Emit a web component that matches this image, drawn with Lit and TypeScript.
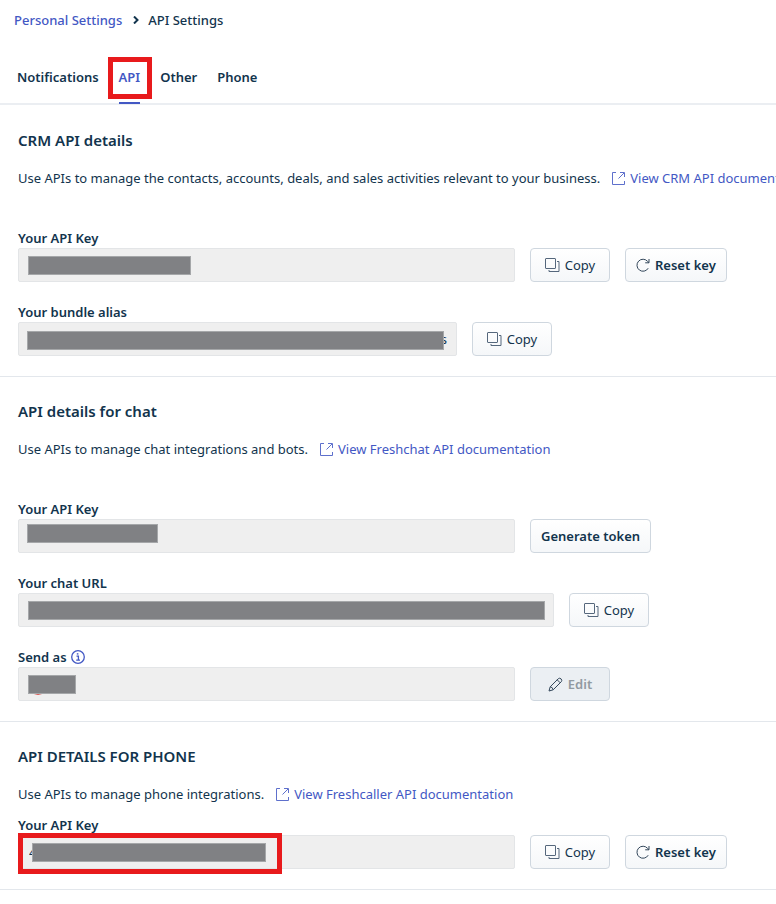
import { LitElement, html, css, svg, nothing } from "lit";
import { customElement } from "lit/decorators.js";
import { styleMap } from "lit/directives/style-map.js";

interface Mask { left: number; top: number; width: number }
interface Field {
  id: string;
  label: string;
  width: number;
  value?: string;
  tail?: string;
  mask: Mask;
  actions: string[];
  info?: boolean;
  avatar?: boolean;
  marked?: boolean;
}
interface Section {
  title: string;
  text: string;
  link: string;
  compact?: boolean;
  fields: Field[];
}

const SECTIONS: Section[] = [
  {
    title: "CRM API details",
    text: "Use APIs to manage the contacts, accounts, deals, and sales activities relevant to your business.",
    link: "View CRM API documentation",
    fields: [
      { id: "crm-key", label: "Your API Key", width: 497, mask: { left: 10, top: 8, width: 163 }, actions: ["copy", "reset"] },
      { id: "alias", label: "Your bundle alias", width: 439, tail: "s", mask: { left: 9, top: 9, width: 417 }, actions: ["copy"] },
    ],
  },
  {
    title: "API details for chat",
    text: "Use APIs to manage chat integrations and bots.",
    link: "View Freshchat API documentation",
    fields: [
      { id: "chat-key", label: "Your API Key", width: 497, mask: { left: 9, top: 5, width: 131 }, actions: ["token"] },
      { id: "chat-url", label: "Your chat URL", width: 536, mask: { left: 10, top: 8, width: 517 }, actions: ["copy"] },
      { id: "send-as", label: "Send as", width: 497, info: true, avatar: true, mask: { left: 10, top: 8, width: 48 }, actions: ["edit"] },
    ],
  },
  {
    title: "API DETAILS FOR PHONE",
    text: "Use APIs to manage phone integrations.",
    link: "View Freshcaller API documentation",
    compact: true,
    fields: [
      { id: "phone-key", label: "Your API Key", width: 497, value: "4", marked: true, mask: { left: 14, top: 8, width: 234 }, actions: ["copy", "reset"] },
    ],
  },
];

const icon = (name: string, size: number, body: unknown) =>
  html`<svg class="icon ${name}" width=${size} height=${size} viewBox="0 0 ${size} ${size}" aria-hidden="true">${body}</svg>`;

const external = icon("external", 13, svg`<path d="M4 .5H.5V12.5H12.5V9M6.5 6.5L12 1M8 .5H12.5V5"/>`);
const chevron = icon("chevron", 8, svg`<path d="M2 0.5L5.5 4L2 7.5"/>`);
const info = icon("info", 14, svg`<circle cx="7" cy="7" r="6.3" stroke-width="1.3"/><path d="M5.5 6.2H7.4V10M5.2 10.2H9" stroke-width="1.3"/><path d="M6.6 3.2V4.6" stroke-width="1.6"/>`);
const copy = icon("copy", 15, svg`<rect x=".5" y=".5" width="10" height="10" rx=".5"/><path d="M12 3.5H14V13.5H4V12"/>`);
const reset = icon("reset", 14, svg`<path d="M12.2 10.2A6 6 0 1 1 11.6 3.4L13 4.6"/><path d="M13 1V4.8H9.2"/>`);
const pencil = icon("pencil", 15, svg`<path d="M1 14L2.2 9.8L10.3 1.7Q11.6.6 13.1 1.9Q14.4 3.4 13.3 4.7L5.2 12.8ZM9.2 2.8L12.2 5.8M2.2 9.8Q4.6 10 5.2 12.8"/>`);

@customElement("app-root")
export class AppRoot extends LitElement {
  static styles = css`
    :host {
      display: block;
      min-height: 100vh;
      overflow: hidden;
      background: #fff;
      color: #12344d;
      font: 400 13px/20px "Noto Sans", "Open Sans", sans-serif;
    }
    * { box-sizing: border-box; }
    a { color: #4358c4; text-decoration: none; }
    .icon { flex: none; fill: none; stroke: currentColor; stroke-width: 1; }
    .crumbs {
      display: flex;
      align-items: center;
      padding: 10px 14px;
      font-weight: 500;
      white-space: nowrap;
    }
    .chevron { margin: 0 8px 0 10px; stroke-width: 2; }
    .tabs {
      display: flex;
      gap: 20px;
      padding: 18px 17px 0;
      border-bottom: 2px solid #ebeef2;
      font-weight: 600;
    }
    .tab {
      position: relative;
      height: 46px;
      margin-bottom: -1px;
      padding-top: 9px;
      color: inherit;
    }
    .tab.active { color: #4358c4; border-bottom: 2px solid #4358c4; }
    .mark {
      position: absolute;
      border: 5px solid #e81a1c;
      pointer-events: none;
    }
    .tab .mark { inset: -1px -12px 3px -11px; }
    .field .mark { left: 0; top: -2px; width: 264px; height: 41px; }
    main { padding-top: 1px; }
    section {
      padding: 22px 18px 20px;
      border-bottom: 1px solid #e3e7ec;
    }
    h2 { margin: 0 0 16px; font-size: 15px; line-height: 24px; font-weight: 600; }
    .about { display: flex; align-items: center; margin: 0 0 40px; white-space: nowrap; }
    .compact .about { margin-bottom: 11px; }
    .doc { display: flex; align-items: center; gap: 5px; margin-left: 12px; }
    .external { opacity: 0.85; }
    .group + .group { margin-top: 20px; }
    .name { display: flex; align-items: center; gap: 4px; font-weight: 600; }
    .info { color: #4358c4; }
    .row { display: flex; gap: 15px; }
    .field { position: relative; flex: 0 1 auto; min-width: 0; }
    input {
      display: block;
      width: 100%;
      height: 34px;
      padding: 0 10px;
      border: 1px solid #e3e5e7;
      border-radius: 2px;
      background: #efefef;
      color: inherit;
      font: inherit;
      outline: none;
    }
    .mask {
      position: absolute;
      height: 19px;
      border: 1px solid #a5a7a9;
      background: #808184;
    }
    .tail { position: absolute; right: 10px; top: 7px; }
    .avatar {
      position: absolute;
      left: 10px;
      top: 8px;
      width: 20px;
      height: 20px;
      border-radius: 50%;
      background: linear-gradient(#7fb5a0 50%, #d9534f 50%);
    }
    button {
      display: flex;
      flex: none;
      align-items: center;
      justify-content: center;
      gap: 5px;
      min-width: 80px;
      height: 34px;
      padding: 0 10px;
      border: 1px solid #cfd7df;
      border-radius: 4px;
      background: linear-gradient(#fff, #f5f7f9);
      color: #12344d;
      font: inherit;
      font-weight: 600;
      white-space: nowrap;
    }
    button.plain { font-weight: 400; }
    button:disabled { background: #ebeff3; color: #929aa1; }
    .copy { color: #55677c; }
    .pencil, .reset { color: #33475b; }
  `;

  private action(kind: string) {
    switch (kind) {
      case "copy": return html`<button class="plain" type="button">${copy}Copy</button>`;
      case "reset": return html`<button type="button">${reset}Reset key</button>`;
      case "token": return html`<button type="button">Generate token</button>`;
      default: return html`<button type="button" disabled>${pencil}Edit</button>`;
    }
  }

  private field(f: Field) {
    const m = f.mask;
    return html`
      <div class="group">
        <div class="name"><label for=${f.id}>${f.label}</label>${f.info ? info : nothing}</div>
        <div class="row">
          <div class="field" style=${styleMap({ width: `${f.width}px` })}>
            <input id=${f.id} type="text" readonly .value=${f.value ?? ""} />
            ${f.avatar ? html`<span class="avatar"></span>` : nothing}
            ${f.tail ? html`<span class="tail">${f.tail}</span>` : nothing}
            <span class="mask" style=${styleMap({ left: `${m.left}px`, top: `${m.top}px`, width: `${m.width}px` })}></span>
            ${f.marked ? html`<span class="mark"></span>` : nothing}
          </div>
          ${f.actions.map((a) => this.action(a))}
        </div>
      </div>`;
  }

  render() {
    return html`
      <nav class="crumbs" aria-label="Breadcrumb">
        <a href="#settings">Personal Settings</a>${chevron}<span>API Settings</span>
      </nav>
      <nav class="tabs" aria-label="Settings">
        <a class="tab" href="#notifications">Notifications</a>
        <a class="tab active" href="#api">API<span class="mark"></span></a>
        <a class="tab" href="#other">Other</a>
        <a class="tab" href="#phone">Phone</a>
      </nav>
      <main>
        ${SECTIONS.map((s) => html`
          <section class=${s.compact ? "compact" : ""}>
            <h2>${s.title}</h2>
            <p class="about">${s.text}<a class="doc" href="#docs">${external}${s.link}</a></p>
            ${s.fields.map((f) => this.field(f))}
          </section>`)}
      </main>`;
  }
}
